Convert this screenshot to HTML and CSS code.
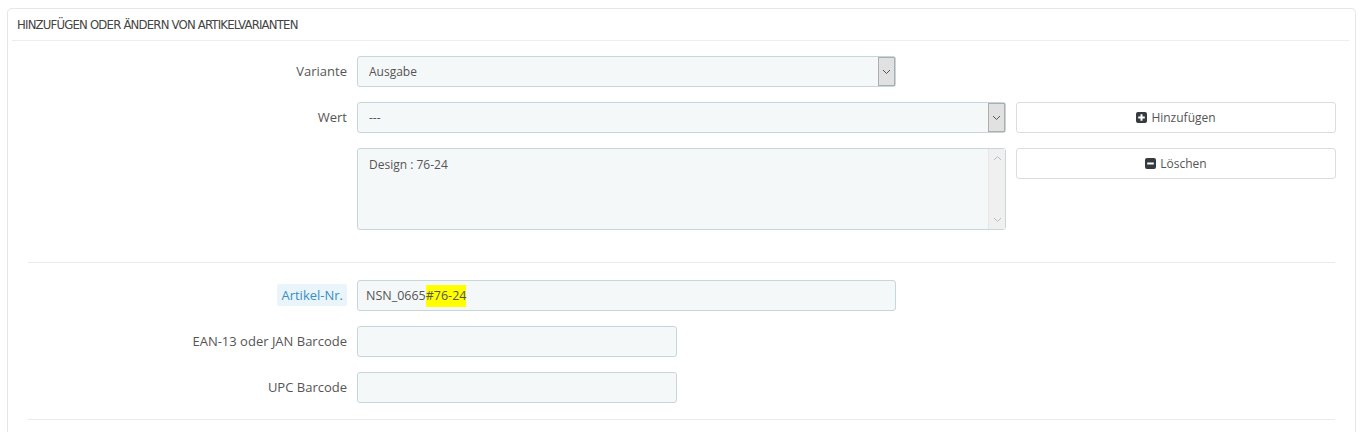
FILE: index.html
```html
<!DOCTYPE html>
<html lang="de">
<head>
<meta charset="utf-8">
<title>Artikelvarianten</title>
<link rel="stylesheet" href="styles.css">
</head>
<body>
<div class="panel">
  <div class="panel-heading">Hinzufügen oder Ändern von Artikelvarianten</div>
  <div class="panel-body">
    <div class="row">
      <label class="lbl">Variante</label>
      <div class="select w538"><span class="val">Ausgabe</span><span class="arrow"><svg width="9" height="6" viewBox="0 0 9 6"><path d="M1 1l3.5 3.5L8 1" fill="none" stroke="#555" stroke-width="1"/></svg></span></div>
    </div>
    <div class="row">
      <label class="lbl">Wert</label>
      <div class="select w648"><span class="val">---</span><span class="arrow"><svg width="9" height="6" viewBox="0 0 9 6"><path d="M1 1l3.5 3.5L8 1" fill="none" stroke="#555" stroke-width="1"/></svg></span></div>
      <button class="btn"><svg class="ico" width="11" height="11" viewBox="0 0 11 11"><rect width="11" height="11" rx="2" fill="#363a41"/><path d="M5.5 2.2v6.6M2.2 5.5h6.6" stroke="#fff" stroke-width="2"/></svg>Hinzufügen</button>
    </div>
    <div class="row">
      <label class="lbl"></label>
      <div class="textarea w648"><span class="val">Design : 76-24</span><span class="scroll"><svg width="9" height="6" viewBox="0 0 9 6"><path d="M1 5l3.5-3.5L8 5" fill="none" stroke="#bbb" stroke-width="1"/></svg><svg width="9" height="6" viewBox="0 0 9 6"><path d="M1 1l3.5 3.5L8 1" fill="none" stroke="#bbb" stroke-width="1"/></svg></span></div>
      <button class="btn"><svg class="ico" width="11" height="11" viewBox="0 0 11 11"><rect width="11" height="11" rx="2" fill="#363a41"/><path d="M2.2 5.5h6.6" stroke="#fff" stroke-width="2"/></svg>Löschen</button>
    </div>
    <hr class="sep first">
    <div class="row">
      <label class="lbl"><span class="hint">Artikel-Nr.</span></label>
      <div class="input w538"><span class="val sku">NSN_0665<mark>#76-24</mark></span></div>
    </div>
    <div class="row">
      <label class="lbl">EAN-13 oder JAN Barcode</label>
      <div class="input w320"></div>
    </div>
    <div class="row">
      <label class="lbl">UPC Barcode</label>
      <div class="input w320"></div>
    </div>
    <hr class="sep last">
  </div>
</div>
</body>
</html>
```
FILE: styles.css
```css
html, body { margin: 0; padding: 0; background: #fff; }
body {
  font-family: "Open Sans", "Liberation Sans", sans-serif;
  font-size: 12px;
  color: #555;
  padding: 8px 8px 0 7px;
}
.panel {
  border: 1px solid #e6e6e6;
  border-bottom: none;
  border-radius: 5px 5px 0 0;
  padding: 0 5px 0 4px;
  box-shadow: 0 2px 0 rgba(0,0,0,0.03);
  height: 440px;
}
.panel-heading {
  font-family: "Ubuntu Condensed", "DejaVu Sans Condensed", "Liberation Sans Narrow", sans-serif;
  font-stretch: condensed;
  text-transform: uppercase;
  font-size: 13px;
  letter-spacing: -0.8px;
  color: #444;
  height: 31px;
  line-height: 31px;
  padding-left: 5px;
  border-bottom: 1px solid #eee;
}
.panel-body {
  padding: 15px 15px 0 16px;
}
.row {
  display: flex;
  align-items: flex-start;
  margin-bottom: 15px;
}
.lbl {
  width: 319px;
  flex: none;
  text-align: right;
  padding-right: 10px;
  line-height: 31px;
  font-size: 13px;
  color: #555;
}
.hint {
  background: #e9f4fb;
  color: #3a8ec2;
  padding: 2px 4px;
  border-radius: 2px;
}
.select, .input, .textarea {
  flex: none;
  box-sizing: border-box;
  height: 31px;
  background: #f5f8f9;
  border: 1px solid #c7d6db;
  border-radius: 3px;
  position: relative;
  display: flex;
  align-items: center;
}
.val { padding-left: 11px; font-size: 12px; color: #555; }
.val.sku { padding-left: 8px; font-size: 12.5px; }
.w538 { width: 539px; }
.w648 { width: 649px; }
.w320 { width: 320px; }
.select .arrow {
  position: absolute;
  right: 0; top: 0; bottom: 0;
  width: 15px;
  background: #e1e1e1;
  border: 1px solid #adadad;
  display: flex;
  align-items: center;
  justify-content: center;
}
.textarea {
  height: 82px;
  align-items: flex-start;
}
.textarea .val { padding-top: 7px; }
.textarea .scroll {
  position: absolute;
  right: 0; top: 0; bottom: 0;
  width: 17px;
  background: #f0f0f0;
  border-left: 1px solid #e6e6e6;
  display: flex;
  flex-direction: column;
  justify-content: space-between;
  align-items: center;
  padding: 6px 0;
  box-sizing: border-box;
}
mark { background: #ffff00; color: #555; padding: 2px 0 3px; }
.btn {
  margin-left: 10px;
  width: 320px;
  height: 31px;
  flex: none;
  background: #fff;
  border: 1px solid #dcdcdc;
  border-radius: 3px;
  font-family: "Open Sans", "Liberation Sans", sans-serif;
  font-size: 12px;
  color: #555;
  display: flex;
  align-items: center;
  justify-content: center;
  padding: 0;
}
.ico { margin-right: 4px; }
.sep {
  border: none;
  border-top: 1px solid #eaeaea;
  margin: 0;
}
.sep.first { margin: 32px 0 17px; }
.sep.last { margin: 16px 0 0; }
```
